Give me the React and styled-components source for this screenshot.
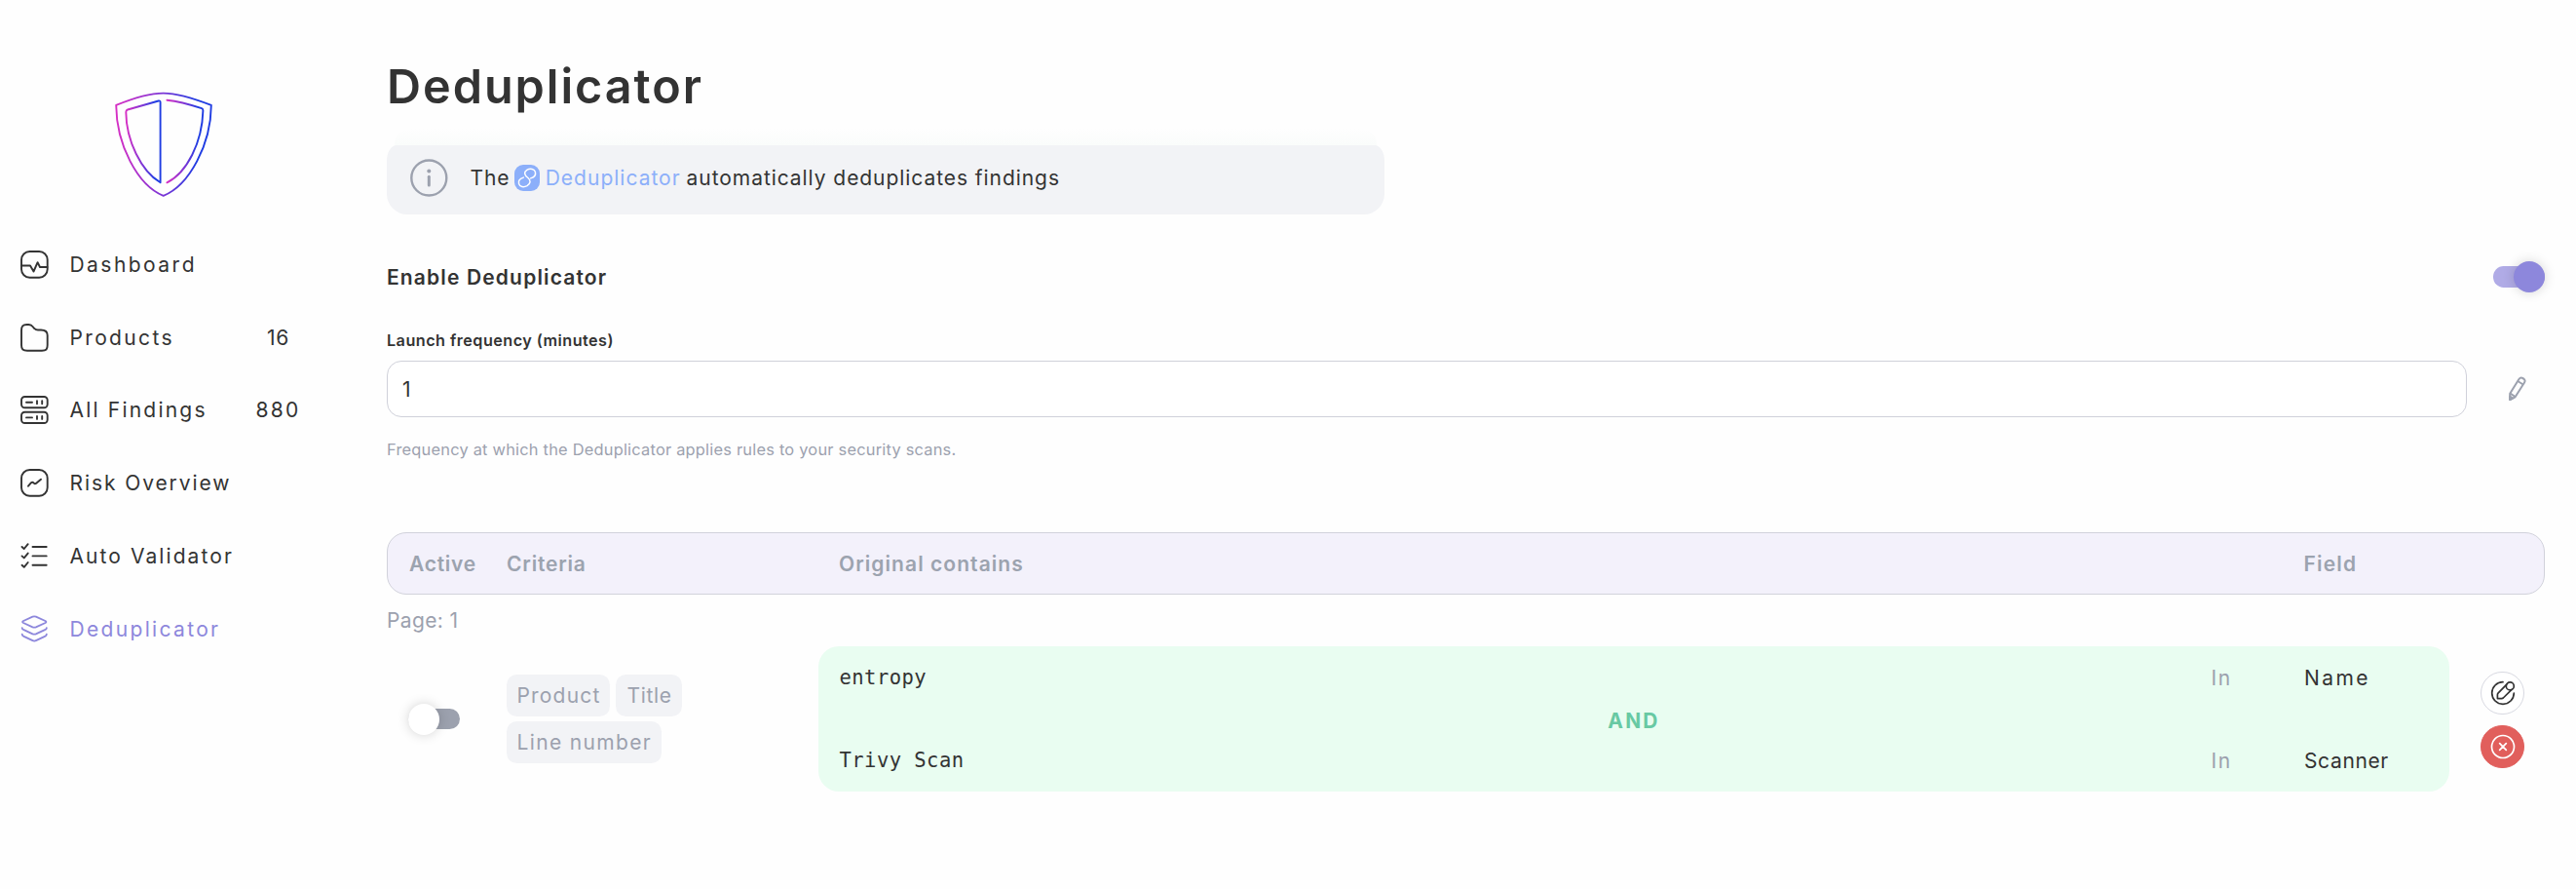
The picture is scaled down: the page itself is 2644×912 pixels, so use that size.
import React from "react";
import styled, { createGlobalStyle } from "styled-components";

const GlobalStyle = createGlobalStyle`
  * { box-sizing: border-box; }
  body { margin: 0; background: #fefefe; color: #333; font-family: Inter, "Liberation Sans", sans-serif; font-size: 21px; }
`;

const Page = styled.div`
  display: flex;
  height: 912px;
  overflow: hidden;
`;

const Sidebar = styled.aside`
  width: 397px;
  flex: none;
  padding: 94px 0 0 20.5px;
`;

const LogoHolder = styled.div`
  height: 140px;
  padding-left: 97.5px;
  svg { display: block; }
`;

const NavItem = styled.a`
  display: flex;
  align-items: center;
  height: 74.8px;
  white-space: nowrap;
  color: ${(p) => (p.$active ? "#8d87dc" : "#333")};
  svg { flex: none; margin-right: 22px; }
`;

const NavLabel = styled.span`
  width: 166px;
  letter-spacing: ${(p) => p.$spacing}px;
`;

const NavCount = styled.span`
  width: 96px;
  text-align: center;
  letter-spacing: ${(p) => p.$spacing}px;
`;

const Main = styled.main`
  width: 2215px;
  padding-top: 59px;
`;

const Title = styled.h1`
  margin: 0;
  font-size: 48.5px;
  line-height: 60px;
  font-weight: 600;
  letter-spacing: 1.97px;
`;

const InfoBox = styled.div`
  position: relative;
  display: flex;
  align-items: center;
  width: 1024px;
  height: 71px;
  margin-top: 30px;
  padding: 0 24px 4px;
  background: #f2f3f6;
  border-radius: 10px 10px 21px 21px / 16px 16px 21px 21px;
  white-space: pre;

  &::before {
    content: "";
    position: absolute;
    left: 8px;
    right: 8px;
    top: -17px;
    height: 17px;
    border-radius: 16px 16px 0 0;
    background: linear-gradient(#fefefe, #fafcfb);
  }
`;

const InfoText = styled.span`
  letter-spacing: ${(p) => p.$spacing}px;
  margin-left: ${(p) => p.$gap}px;
`;

const InfoLink = styled.a`
  display: inline-flex;
  align-items: center;
  gap: 6px;
  margin-left: 4.5px;
  color: #8caffa;
  letter-spacing: 1px;
`;

const LinkBadge = styled.span`
  display: flex;
  width: 26px;
  height: 27px;
  border-radius: 9px;
  background: #8caffa;
`;

const SettingRow = styled.div`
  display: flex;
  align-items: center;
  justify-content: space-between;
  height: 32px;
  margin-top: 48px;
`;

const SettingName = styled.h2`
  margin: 0;
  font-size: 21px;
  font-weight: 600;
  letter-spacing: 1.15px;
`;

const SwitchTrack = styled.span`
  display: flex;
  align-items: center;
  justify-content: ${(p) => (p.$on ? "flex-end" : "flex-start")};
  width: 53px;
  height: 21.3px;
  border-radius: 10.7px;
  background: ${(p) => (p.$on ? "#b0abe6" : "#9ca1ae")};
`;

const SwitchThumb = styled.span`
  width: 32px;
  height: 32px;
  border-radius: 50%;
  background: ${(p) => (p.$on ? "#8d87dc" : "#fff")};
  box-shadow: 0 0 12px rgba(0, 0, 0, 0.17);
`;

const FieldLabel = styled.label`
  display: block;
  margin-top: 39px;
  line-height: 20px;
  font-size: 16.2px;
  font-weight: 600;
  letter-spacing: 0.47px;
`;

const FieldRow = styled.div`
  display: flex;
  align-items: center;
  margin-top: 11px;
  svg { margin-left: 43px; }
`;

const FieldInput = styled.div`
  display: flex;
  align-items: center;
  width: 2135px;
  height: 58px;
  padding: 0 15px;
  border: 1px solid #d0d1da;
  border-radius: 15px;
  background: #fff;
`;

const HelpText = styled.p`
  margin: 23px 0 0;
  font-size: 16.4px;
  line-height: 20px;
  letter-spacing: 0.22px;
  color: #9ca1ae;
`;

const TableHead = styled.div`
  display: grid;
  grid-template-columns: 100px 341px 1503.5px auto;
  align-items: center;
  height: 64px;
  margin-top: 75px;
  padding: 0 22px;
  border: 1px solid #d1d2db;
  border-radius: 20px;
  background: #f3f1fb;
  color: #9ca3af;
  font-weight: 600;
`;

const HeadCell = styled.span`
  letter-spacing: ${(p) => p.$spacing}px;
`;

const PageLabel = styled.div`
  margin: 12px 0 11px;
  line-height: 30px;
  letter-spacing: 0.35px;
  color: #9ca1ae;
`;

const RuleRow = styled.div`
  display: grid;
  grid-template-columns: 100.5px 320.5px 1674px 45px;
  align-items: center;
  height: 149px;
  padding-left: 22px;
`;

const Tags = styled.div`
  display: flex;
  flex-wrap: wrap;
  gap: 5px 6px;
  width: 200px;
`;

const Tag = styled.span`
  height: 43px;
  line-height: 43px;
  padding: 0 10px 0 11px;
  border-radius: 10.5px;
  background: #f2f3f6;
  color: #9ca1ae;
  letter-spacing: ${(p) => p.$spacing}px;
`;

const RuleCard = styled.div`
  height: 149px;
  padding: 16.5px 21.5px 16.5px;
  border-radius: 21px;
  background: #e9fdf1;
`;

const Condition = styled.div`
  display: grid;
  grid-template-columns: 1408px 95.5px auto;
  line-height: 31px;
  height: 31px;
`;

const Term = styled.span`
  font-family: "DejaVu Sans Mono", "Liberation Mono", monospace;
  font-size: 20.5px;
  letter-spacing: 0.46px;
`;

const Operator = styled.span`
  color: #9ca1ae;
  letter-spacing: 1.6px;
`;

const FieldName = styled.span`
  letter-spacing: ${(p) => p.$spacing}px;
`;

const Joiner = styled.div`
  height: 54px;
  padding-top: 3px;
  line-height: 51px;
  text-align: center;
  font-weight: 700;
  letter-spacing: 2.2px;
  color: #68c9a3;
`;

const Actions = styled.div`
  display: flex;
  flex-direction: column;
  gap: 11px;
  margin: 1px 0 0 32px;
`;

const ActionButton = styled.button`
  display: flex;
  align-items: center;
  justify-content: center;
  width: 45px;
  height: 44px;
  padding: 0;
  border-radius: 22px;
  border: 1px solid ${(p) => (p.$danger ? "#e15f5c" : "#d8d9e1")};
  background: ${(p) => (p.$danger ? "#e15f5c" : "#fff")};
`;

function Toggle({ on }) {
  return (
    <SwitchTrack $on={on} role="switch" aria-checked={!!on}>
      <SwitchThumb $on={on} />
    </SwitchTrack>
  );
}

function Logo() {
  return (
    <svg width="100" height="108" viewBox="0 0 100 108" fill="none" stroke="url(#shield)" strokeWidth="1.9" strokeLinecap="round" strokeLinejoin="round">
      <defs>
        <linearGradient id="shield">
          <stop offset="0" stopColor="#d62fc4" />
          <stop offset="0.5" stopColor="#7a36d6" />
          <stop offset="0.85" stopColor="#1f3ce2" />
        </linearGradient>
      </defs>
      <path d="M1.200 13.900C18 7 37 1.600 49.700 1.600S81 7 98.800 13.900C98.500 54 76.500 96 49.700 106.800C23 96 1.500 54 1.200 13.900Z" />
      <path d="M46.600 92.800V11Q46.600 9 44.700 9.500L13 18.500Q11.300 19 11.300 21C11.500 50 27 82 46.600 93.200" />
      <path d="M53.400 8.700C62 9.500 78 13.500 89 17.200Q90.500 17.700 90.400 19.500C89.500 52 74 83 53.400 93.300" />
    </svg>
  );
}

const shapes = {
  dashboard: (
    <>
      <rect x="1" y="1" width="26.700" height="26.700" rx="8.500" />
      <path d="M1 15.500H10L13.500 21.500L17.600 12.200L20 17H27.500" />
    </>
  ),
  folder: <path d="M1 7C1 2.500 2.500 1 6.500 1H8.500C12.500 1 12 3 14.500 5.200C15.500 6.300 16 6.500 18 6.500H21C25.500 6.500 27.700 8 27.700 12V22C27.700 26.500 26.500 27.700 22 27.700H7C2.500 27.700 1 26.500 1 22Z" />,
  servers: (
    <>
      <rect x="1" y="1" width="26.700" height="11.300" rx="3.500" />
      <rect x="1" y="16.700" width="26.700" height="11.300" rx="3.500" />
      <path d="M6 6.700H12M17 5.200V8.200M22.200 5.200V8.200M6 22.400H12M17 20.900V23.900M22.200 20.900V23.900" />
    </>
  ),
  risk: (
    <>
      <rect x="1" y="1" width="26.700" height="26.700" rx="8.500" />
      <path d="M8 17.700L11 14.200Q12.300 13 13.500 14.300Q14.700 16 16.200 14.700L21 10.700" />
    </>
  ),
  checks: <path d="M1.500 5L3.700 7L7.700 2.200M1.500 14.400L3.700 16.400L7.700 11.600M1.500 23.800L3.700 25.800L7.700 21M12.500 5H26.700M12.500 14.400H26.700M12.500 23.800H26.700" />,
  layers: (
    <>
      <path d="M12.500 1.700Q14.200 1 15.900 1.700L25.500 6Q27.200 7 25.500 8L15.900 12.300Q14.200 13 12.500 12.300L3 8Q1.300 7 3 6Z" />
      <path d="M1.700 13.200Q1.800 14.500 3.500 15.200L12.500 19.300Q14.200 20 15.900 19.300L25 15.200Q26.700 14.500 26.800 13.200M1.700 19.700Q1.800 21.200 3.500 21.900L12.500 26.200Q14.200 27 15.900 26.200L25 21.900Q26.700 21.200 26.800 19.700" />
    </>
  ),
};

function NavIcon({ name }) {
  return (
    <svg width="29" height="29" viewBox="0 0 29 29" fill="none" stroke="currentColor" strokeWidth="1.9" strokeLinecap="round" strokeLinejoin="round">
      {shapes[name]}
    </svg>
  );
}

function InfoIcon() {
  return (
    <svg width="39" height="39" viewBox="0 0 39 39" fill="none" stroke="#9ca1ae" strokeWidth="2.4">
      <circle cx="19.300" cy="19.500" r="18" />
      <path d="M19.300 18.200V27" strokeWidth="3" strokeLinecap="round" />
      <circle cx="19.300" cy="12.500" r="2" fill="#9ca1ae" stroke="none" />
    </svg>
  );
}

function ChainIcon() {
  return (
    <svg width="26" height="27" viewBox="0 0 26 27" fill="none" stroke="#fff" strokeWidth="1.500" strokeLinecap="round">
      <path d="M9.300 13.100C5.500 14.300 3.800 17 4.600 19.600C5.500 22.900 9.500 23.400 13 21.600C16.800 19.500 17 16 14 13.500C10 10.800 9.500 7.500 12.800 5.300C16.400 3.300 20.600 4.300 21.400 7.400C22.100 10.100 20.400 12.800 16.700 13.900" />
    </svg>
  );
}

function PencilIcon() {
  return (
    <svg width="18" height="26" viewBox="0 0 18 26" fill="none" stroke="#9ca1ae" strokeWidth="2" strokeLinejoin="round">
      <path d="M1.200 24V17.800L10.400 3Q12 .8 14.400 2Q17.700 3.800 16 6.500L6.600 21.300L1.200 24Z" />
      <path d="M9.200 5L14.800 8.500M1.600 17.700L6.600 21" />
      <path d="M1.200 20.500L4 22.500L1.200 24Z" fill="#9ca1ae" />
    </svg>
  );
}

function EditIcon() {
  return (
    <svg width="26" height="26" viewBox="-1 -1 26 26" fill="none" stroke="#333" strokeWidth="1.700" strokeLinecap="round" strokeLinejoin="round">
      <path d="M12 .7A11.300 11.300 0 1 0 23.300 12" />
      <path d="M15.600 3.300L7 12.200Q6.400 12.800 6.400 13.800V17.600H10.800Q11.600 17.600 12.300 17L21.300 8.200" />
      <circle cx="19.300" cy="4.900" r="4" />
    </svg>
  );
}

function CloseIcon() {
  return (
    <svg width="26" height="26" viewBox="0 0 26 26" fill="none" stroke="#fff" strokeWidth="1.700" strokeLinecap="round">
      <circle cx="13" cy="13" r="11.500" />
      <path d="M9.700 9.700L16.300 16.300M16.300 9.700L9.700 16.300" />
    </svg>
  );
}

const navItems = [
  { icon: "dashboard", label: "Dashboard", spacing: 2.46 },
  { icon: "folder", label: "Products", spacing: 2.35, count: "16", countSpacing: 0.7 },
  { icon: "servers", label: "All Findings", spacing: 2.2, count: "880", countSpacing: 2.3 },
  { icon: "risk", label: "Risk Overview", spacing: 1.91 },
  { icon: "checks", label: "Auto Validator", spacing: 2.08 },
  { icon: "layers", label: "Deduplicator", spacing: 2.33, active: true },
];

export default function App() {
  return (
    <Page>
      <GlobalStyle />
      <Sidebar>
        <LogoHolder><Logo /></LogoHolder>
        <nav>
          {navItems.map((item) => (
            <NavItem key={item.label} $active={item.active}>
              <NavIcon name={item.icon} />
              <NavLabel $spacing={item.spacing}>{item.label}</NavLabel>
              {item.count && <NavCount $spacing={item.countSpacing}>{item.count}</NavCount>}
            </NavItem>
          ))}
        </nav>
      </Sidebar>
      <Main>
        <Title>Deduplicator</Title>
        <InfoBox>
          <InfoIcon />
          <InfoText $gap={22.5} $spacing={0.83}>The</InfoText>
          <InfoLink>
            <LinkBadge><ChainIcon /></LinkBadge>
            Deduplicator
          </InfoLink>
          <InfoText $gap={6} $spacing={0.94}>automatically deduplicates findings</InfoText>
        </InfoBox>
        <SettingRow>
          <SettingName>Enable Deduplicator</SettingName>
          <Toggle on />
        </SettingRow>
        <FieldLabel>Launch frequency (minutes)</FieldLabel>
        <FieldRow>
          <FieldInput>1</FieldInput>
          <PencilIcon />
        </FieldRow>
        <HelpText>Frequency at which the Deduplicator applies rules to your security scans.</HelpText>
        <TableHead>
          <HeadCell $spacing={0.74}>Active</HeadCell>
          <HeadCell $spacing={0.81}>Criteria</HeadCell>
          <HeadCell $spacing={1.06}>Original contains</HeadCell>
          <HeadCell $spacing={1.17}>Field</HeadCell>
        </TableHead>
        <PageLabel>Page: 1</PageLabel>
        <RuleRow>
          <Toggle />
          <Tags>
            <Tag $spacing={1.18}>Product</Tag>
            <Tag $spacing={0.66}>Title</Tag>
            <Tag $spacing={1.35}>Line number</Tag>
          </Tags>
          <RuleCard>
            <Condition>
              <Term>entropy</Term>
              <Operator>In</Operator>
              <FieldName $spacing={2.4}>Name</FieldName>
            </Condition>
            <Joiner>AND</Joiner>
            <Condition>
              <Term>Trivy Scan</Term>
              <Operator>In</Operator>
              <FieldName $spacing={0.64}>Scanner</FieldName>
            </Condition>
          </RuleCard>
          <Actions>
            <ActionButton aria-label="Edit rule"><EditIcon /></ActionButton>
            <ActionButton $danger aria-label="Delete rule"><CloseIcon /></ActionButton>
          </Actions>
        </RuleRow>
      </Main>
    </Page>
  );
}
